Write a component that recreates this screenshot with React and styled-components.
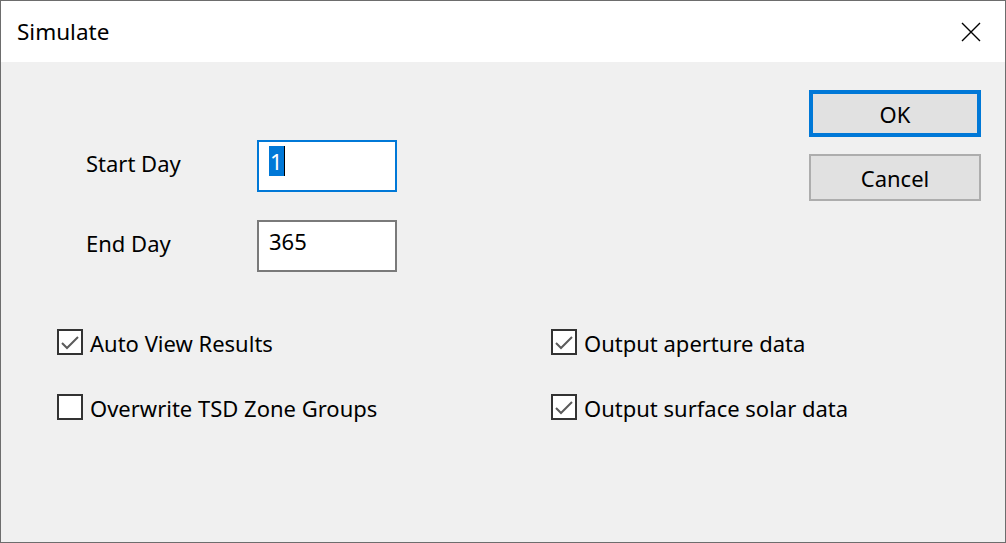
import styled, { createGlobalStyle } from 'styled-components'

const Global = createGlobalStyle`
  html, body {
    margin: 0;
    padding: 0;
    background: #f0f0f0;
  }
  body {
    font-family: "Noto Sans", "Open Sans", sans-serif;
    color: #000;
  }
`

const Window = styled.div`
  width: 1006px;
  height: 543px;
  box-sizing: border-box;
  border: 1px solid #6d6d6d;
  background: #f0f0f0;
  display: flex;
  flex-direction: column;
`

const TitleBar = styled.div`
  height: 61px;
  background: #fff;
  display: flex;
  align-items: center;
  justify-content: space-between;
  padding: 0 23px 0 16px;
  flex-shrink: 0;
`

const Title = styled.span`
  font-size: 22.5px;
  line-height: 1;
  margin-top: 2px;
`

const CloseButton = styled.button`
  width: 22px;
  height: 22px;
  padding: 0;
  border: 0;
  background: transparent;
  display: flex;
  align-items: center;
  justify-content: center;
`

const Body = styled.div`
  flex: 1;
  display: flex;
  flex-direction: column;
  padding: 28px 24px 0 56px;
`

const Top = styled.div`
  display: flex;
  justify-content: space-between;
`

const Form = styled.div`
  padding-top: 50px;
  padding-left: 29px;
  display: flex;
  flex-direction: column;
  gap: 28px;
`

const Row = styled.div`
  display: flex;
  align-items: center;
`

const Label = styled.label`
  width: 171px;
  font-size: 22px;
  line-height: 30px;
  margin-top: -6px;
`

const Field = styled.div`
  width: 140px;
  height: 52px;
  box-sizing: border-box;
  border: 2px solid ${p => (p.$focused ? '#0078d7' : '#7a7a7a')};
  background: #fff;
  padding: 4px 0 0 10px;
  font-size: 22px;
  line-height: 30px;
`

const Selected = styled.span`
  background: #0078d7;
  color: #fff;
  display: inline-block;
  padding: 0 1px;
  border-right: 1px solid #000;
`

const Buttons = styled.div`
  display: flex;
  flex-direction: column;
  gap: 17px;
`

const Button = styled.button`
  width: 172px;
  height: 47px;
  box-sizing: border-box;
  background: #e1e1e1;
  border: ${p => (p.$default ? '4px solid #0078d7' : '2px solid #adadad')};
  font-family: inherit;
  font-size: 22px;
  color: #000;
  padding: 0;
`

const Checks = styled.div`
  display: grid;
  grid-template-columns: 494px 1fr;
  row-gap: 39px;
  margin-top: 57px;
`

const CheckRow = styled.label`
  display: flex;
  align-items: center;
  gap: 7px;
  font-size: 22px;
  height: 26px;
`

const Text = styled.span`
  margin-top: 2px;
`

const Box = styled.span`
  width: 26px;
  height: 26px;
  box-sizing: border-box;
  border: 2px solid #333;
  background: #fff;
  display: flex;
  align-items: center;
  justify-content: center;
  flex-shrink: 0;
`

const Check = ({ label, checked }) => (
  <CheckRow>
    <Box>
      {checked && (
        <svg width="22" height="22" viewBox="0 0 22 22">
          <polyline points="3,12 8,17 19,6" fill="none" stroke="#5b5b5b" strokeWidth="2" />
        </svg>
      )}
    </Box>
    <Text>{label}</Text>
  </CheckRow>
)

export default function App() {
  return (
    <>
      <Global />
      <Window>
        <TitleBar>
          <Title>Simulate</Title>
          <CloseButton>
            <svg width="20" height="20" viewBox="0 0 20 20">
              <path d="M1 1L19 19M19 1L1 19" stroke="#000" strokeWidth="1.4" />
            </svg>
          </CloseButton>
        </TitleBar>
        <Body>
          <Top>
            <Form>
              <Row>
                <Label>Start Day</Label>
                <Field $focused>
                  <Selected>1</Selected>
                </Field>
              </Row>
              <Row>
                <Label>End Day</Label>
                <Field>365</Field>
              </Row>
            </Form>
            <Buttons>
              <Button $default>OK</Button>
              <Button>Cancel</Button>
            </Buttons>
          </Top>
          <Checks>
            <Check label="Auto View Results" checked />
            <Check label="Output aperture data" checked />
            <Check label="Overwrite TSD Zone Groups" />
            <Check label="Output surface solar data" checked />
          </Checks>
        </Body>
      </Window>
    </>
  )
}
